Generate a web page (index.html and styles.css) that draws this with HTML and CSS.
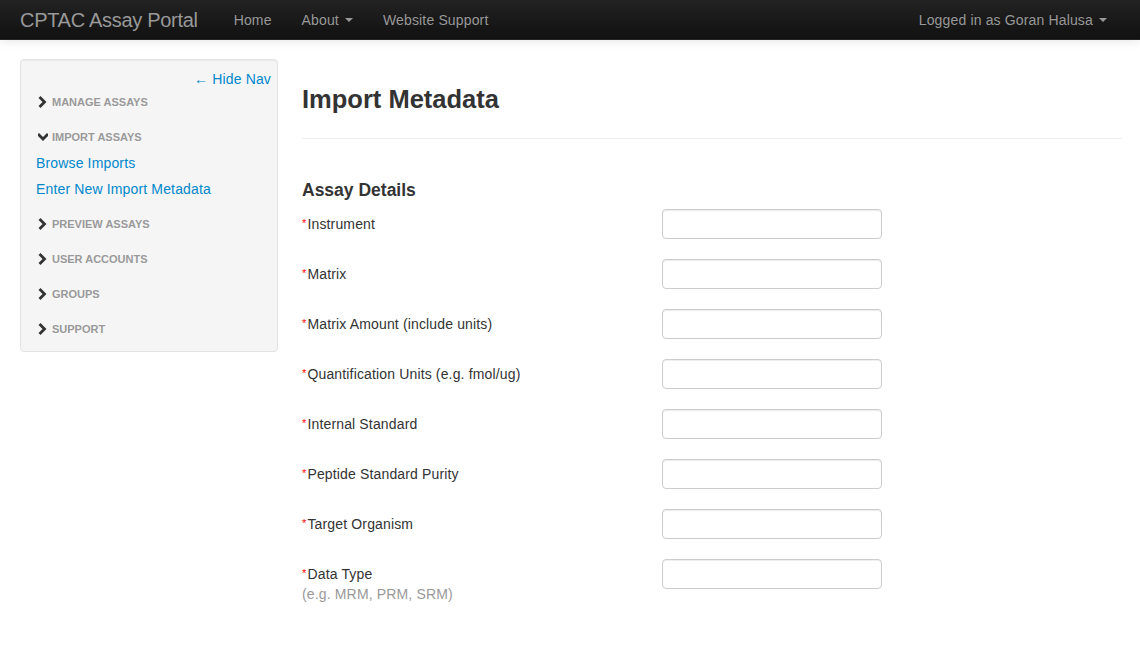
FILE: index.html
```html
<!DOCTYPE html>
<html>
<head>
<meta charset="utf-8">
<title>CPTAC Assay Portal</title>
<link rel="stylesheet" href="styles.css">
</head>
<body>
<header class="navbar">
  <div class="nav-left">
    <a class="brand" href="#">CPTAC Assay Portal</a>
    <a class="nav-link" href="#">Home</a>
    <a class="nav-link" href="#">About <span class="caret"></span></a>
    <a class="nav-link" href="#">Website Support</a>
  </div>
  <div class="nav-right">
    <a class="nav-link" href="#">Logged in as Goran Halusa <span class="caret"></span></a>
  </div>
</header>
<div class="container">
  <aside class="sidebar">
    <div class="hide-nav"><a href="#">&larr; Hide Nav</a></div>
    <ul class="nav-list">
      <li class="nav-header"><svg class="chev" viewBox="0 0 10 12"><polyline points="2.5,2 6.5,6 2.5,10"/></svg>Manage Assays</li>
      <li class="nav-header gap"><svg class="chev" viewBox="0 0 10 12"><polyline points="1,4 5,8 9,4"/></svg>Import Assays</li>
      <li><a href="#">Browse Imports</a></li>
      <li><a href="#">Enter New Import Metadata</a></li>
      <li class="nav-header gap"><svg class="chev" viewBox="0 0 10 12"><polyline points="2.5,2 6.5,6 2.5,10"/></svg>Preview Assays</li>
      <li class="nav-header gap"><svg class="chev" viewBox="0 0 10 12"><polyline points="2.5,2 6.5,6 2.5,10"/></svg>User Accounts</li>
      <li class="nav-header gap"><svg class="chev" viewBox="0 0 10 12"><polyline points="2.5,2 6.5,6 2.5,10"/></svg>Groups</li>
      <li class="nav-header gap"><svg class="chev" viewBox="0 0 10 12"><polyline points="2.5,2 6.5,6 2.5,10"/></svg>Support</li>
    </ul>
  </aside>
  <main class="main">
    <h1 class="page-title">Import Metadata</h1>
    <hr class="divider">
    <h4 class="section-title">Assay Details</h4>
    <form class="form">
      <div class="control-group"><label class="control-label"><span class="req">*</span>Instrument</label><input class="field" type="text"></div>
      <div class="control-group"><label class="control-label"><span class="req">*</span>Matrix</label><input class="field" type="text"></div>
      <div class="control-group"><label class="control-label"><span class="req">*</span>Matrix Amount (include units)</label><input class="field" type="text"></div>
      <div class="control-group"><label class="control-label"><span class="req">*</span>Quantification Units (e.g. fmol/ug)</label><input class="field" type="text"></div>
      <div class="control-group"><label class="control-label"><span class="req">*</span>Internal Standard</label><input class="field" type="text"></div>
      <div class="control-group"><label class="control-label"><span class="req">*</span>Peptide Standard Purity</label><input class="field" type="text"></div>
      <div class="control-group"><label class="control-label"><span class="req">*</span>Target Organism</label><input class="field" type="text"></div>
      <div class="control-group"><label class="control-label"><span class="req">*</span>Data Type<br><span class="help">(e.g. MRM, PRM, SRM)</span></label><input class="field" type="text"></div>
    </form>
  </main>
</div>
</body>
</html>
```
FILE: styles.css
```css
* { box-sizing: content-box; }
html, body { margin: 0; padding: 0; }
body {
  font-family: "Liberation Sans", Arial, sans-serif;
  font-size: 14px;
  line-height: 20px;
  letter-spacing: 0.15px;
  color: #333;
  background: #fff;
}
a { text-decoration: none; }

.navbar {
  height: 40px;
  display: flex;
  justify-content: space-between;
  align-items: center;
  padding: 0 18px 0 20px;
  background: linear-gradient(to bottom, #222 0%, #111 100%);
  border-bottom: 1px solid #252525;
  box-sizing: border-box;
  box-shadow: 0 1px 10px rgba(0,0,0,0.1);
}
.nav-left, .nav-right { display: flex; align-items: center; }
.brand {
  color: #999;
  font-size: 20px;
  line-height: 20px;
  letter-spacing: -0.3px;
  padding: 10px 21px 10px 0;
  font-weight: normal;
}
.nav-link {
  color: #999;
  font-size: 14px;
  line-height: 20px;
  padding: 10px 15px;
  text-shadow: 0 -1px 0 rgba(0,0,0,0.25);
}
.caret {
  display: inline-block;
  width: 0; height: 0;
  border-top: 4px solid #999;
  border-left: 4px solid transparent;
  border-right: 4px solid transparent;
  vertical-align: middle;
  margin-left: 2px;
  margin-top: -2px;
}

.container {
  display: flex;
  gap: 24px;
  padding: 19px 18px 0 20px;
}
.sidebar {
  width: 256px;
  flex: none;
  align-self: flex-start;
  background: #f5f5f5;
  border: 1px solid #e3e3e3;
  border-radius: 4px;
  box-shadow: inset 0 1px 1px rgba(0,0,0,0.05);
  padding: 9px 0 9px;
}
.hide-nav {
  text-align: right;
  padding-right: 6px;
  line-height: 20px;
}
.hide-nav a { color: #0088cc; font-size: 14px; }
.nav-list {
  list-style: none;
  margin: 0;
  padding: 0 15px;
}
.nav-list li { line-height: 20px; }
.nav-list li a {
  display: block;
  color: #0088cc;
  padding: 3px 0;
}
.nav-header {
  display: flex;
  align-items: center;
  padding: 3px 0 3px 2px;
  font-size: 11px;
  font-weight: bold;
  letter-spacing: 0;
  color: #999;
  text-transform: uppercase;
  text-shadow: 0 1px 0 rgba(255,255,255,0.5);
}
.nav-header.gap { margin-top: 9px; }
.chev {
  width: 10px;
  height: 12px;
  margin-right: 4px;
  fill: none;
  stroke: #333;
  stroke-width: 2.8;
  stroke-linecap: square;
}

.main { flex: 1; min-width: 0; }
.page-title {
  margin: 20px 0 0;
  font-size: 25.5px;
  line-height: 40px;
  font-weight: bold;
  letter-spacing: 0;
  color: #333;
}
.divider {
  margin: 19px 0 0;
  border: 0;
  border-top: 1px solid #eee;
  border-bottom: 1px solid #fff;
  height: 0;
}
.section-title {
  margin: 40px 0 9px;
  font-size: 17.5px;
  line-height: 20px;
  font-weight: bold;
  letter-spacing: 0;
  color: #333;
}
.form { margin: 0; }
.control-group {
  display: flex;
  align-items: flex-start;
  margin-bottom: 20px;
}
.control-label {
  width: 360px;
  flex: none;
  padding-top: 5px;
  line-height: 20px;
  color: #333;
}
.req {
  color: #ff0000;
  font-size: 11px;
  vertical-align: 2px;
  line-height: 14px;
  margin-right: 1px;
}
.help { color: #999; }
.field {
  width: 206px;
  height: 20px;
  padding: 4px 6px;
  margin: 0;
  font-family: inherit;
  font-size: 14px;
  border: 1px solid #ccc;
  border-radius: 4px;
  background: #fff;
  box-shadow: inset 0 1px 1px rgba(0,0,0,0.075);
  outline: none;
}
```
